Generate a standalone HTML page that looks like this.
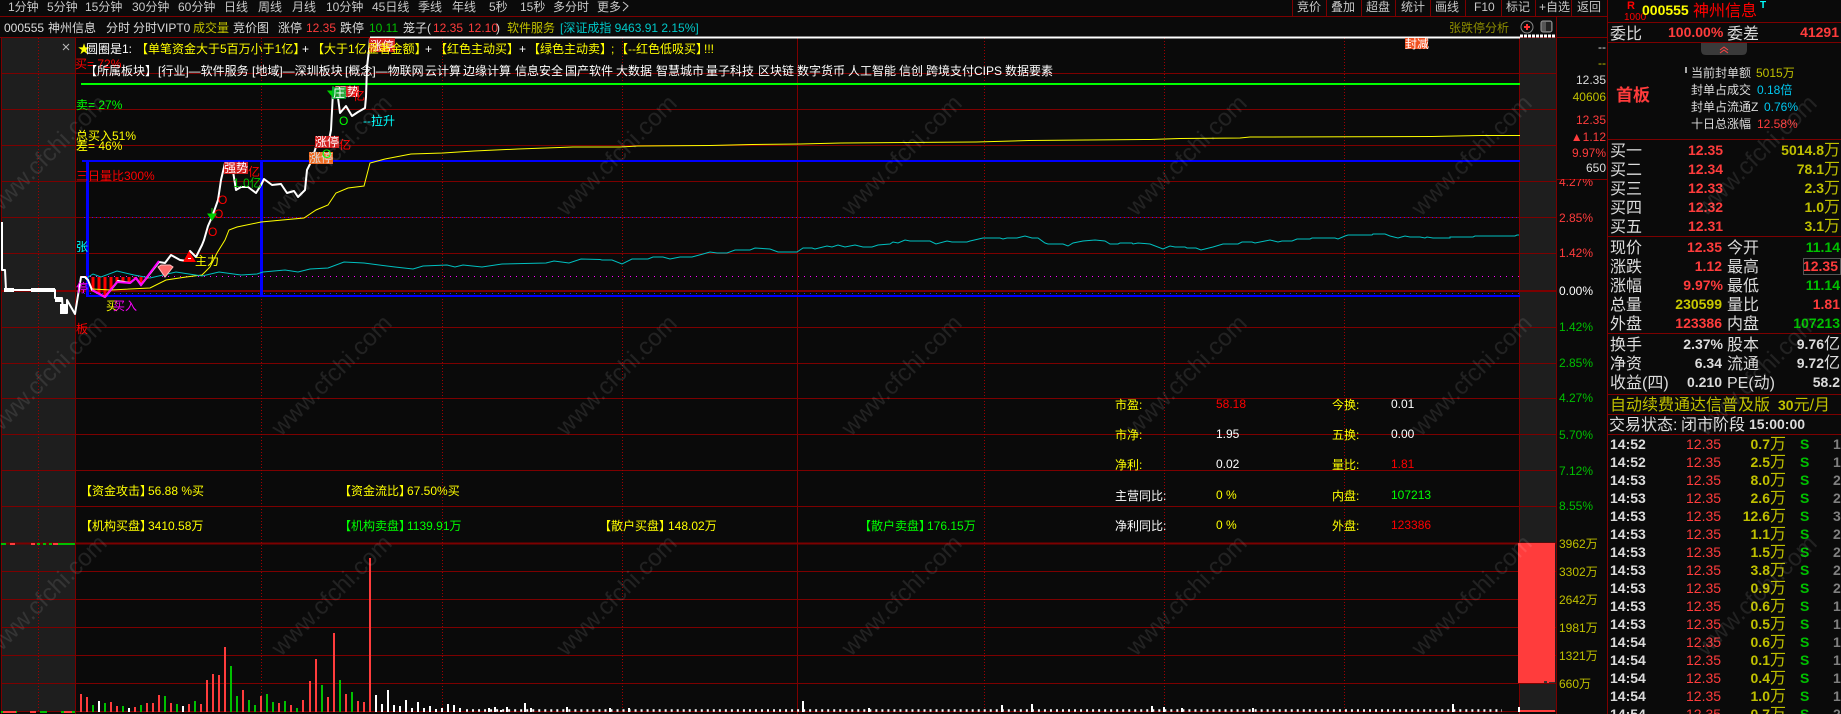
<!DOCTYPE html>
<html lang="zh"><head><meta charset="utf-8"><title>000555 神州信息</title>
<style>
html,body{margin:0;padding:0;background:#0a0a0a;width:1841px;height:714px;overflow:hidden}
svg{display:block;font-family:"Liberation Sans","WenQuanYi Zen Hei","Noto Sans CJK SC",sans-serif;font-size:12px}
text{white-space:pre}
.g1{fill:#c8c8c8}.w{fill:#fff}.lg{fill:#dcdcdc}.r{fill:#ff3c3c}.R{fill:#f00}.gr{fill:#00c000}.G{fill:#0f0}.y{fill:#ff0}.o{fill:#c0c000}.c{fill:#00c8c8}.C{fill:#0ff}.m{fill:#f0f}
.big{font-size:16px}.b{font-size:14px;font-weight:bold}.p{font-size:14px}
.u{font-size:16px;font-weight:normal}
.e{text-anchor:end}
</style></head><body>
<svg width="1841" height="714" viewBox="0 0 1841 714" xmlns="http://www.w3.org/2000/svg">
<rect width="1841" height="714" fill="#0a0a0a"/>
<rect x="2" y="38" width="73" height="674" fill="#1e1e1e"/>
<rect x="1520" y="38" width="36" height="674" fill="#1e1e1e"/>

<!-- grid -->
<g stroke="#7c0000" stroke-width="1" fill="none" shape-rendering="crispEdges">
<path d="M0 16.5H1607M0 37.5H1607M1607 22.5H1841M1607 42.5H1841M1607 139.5H1841M1607 236.5H1841M1607 333.5H1841M1607 394.5H1841M1607 414.5H1841M1607 434.5H1841M1556 179.5H1607"/>
<path d="M2 73.5H1556M2 109.5H1556M2 145.5H1556M2 181.5H1556M2 217.5H1556M2 253.5H1556M2 327.5H1556M2 363.5H1556M2 398.5H1556M2 434.5H1556M2 470.5H1556M2 506.5H1556M2 571.5H1556M2 599.5H1556M2 627.5H1556M2 655.5H1556M2 683.5H1556M2 711.5H1556"/>
<path d="M1.5 37V714M75.5 37V714M797.5 37V714M1519.5 37V714M1556.5 16V714M1607.5 0V714"/>
<path d="M1292.5 0V16M1326.5 0V16M1361.5 0V16M1395.5 0V16M1430.5 0V16M1465.5 0V16M1501.5 0V16M1535.5 0V16M1571.5 0V16"/>
</g>
<path d="M2 291H1556M2 543.5H1556" stroke="#7c0000" stroke-width="2" shape-rendering="crispEdges"/>
<g stroke="#a00000" stroke-width="1" stroke-dasharray="1 2" shape-rendering="crispEdges">
<path d="M38.5 38V712M261.5 38V712M442.5 38V712M622.5 38V712M984.5 38V712M1164.5 38V712M1344.5 38V712"/>
</g>

<!-- dots -->
<path d="M84 276.5H1519" stroke="#f0f" stroke-width="1" stroke-dasharray="1 5" shape-rendering="crispEdges"/>
<path d="M84 293.5H1519" stroke="#2020ff" stroke-width="1" stroke-dasharray="1 5" shape-rendering="crispEdges"/>
<path d="M84 217.5H1519" stroke="#2020ff" stroke-width="1" stroke-dasharray="1 3" shape-rendering="crispEdges"/>

<!-- level lines -->
<path d="M81 84H1520" stroke="#0f0" stroke-width="2" shape-rendering="crispEdges"/>
<path d="M82 161H1520M86 296H1520" stroke="#0000ff" stroke-width="2" fill="none" shape-rendering="crispEdges"/>
<path d="M87.5 160V297M261.5 160V297" stroke="#0000ff" stroke-width="3" fill="none" shape-rendering="crispEdges"/>
<path d="M370 37.5H1520" stroke="#fff" stroke-width="2" shape-rendering="crispEdges"/>
<path d="M1520 36H1556" stroke="#fff" stroke-width="3" stroke-dasharray="3 1" shape-rendering="crispEdges"/>

<!-- red bars -->
<path d="M93 277V290M99 277V294M105 277V297M111 277V290M117 277V282M123 277V282M129 277V283M135 277V278M141 277V285M147 277V279" stroke="#f00" stroke-width="3" fill="none"/>
<rect x="80" y="276" width="7" height="2" fill="#f00"/>

<!-- yellow avg line -->
<polyline fill="none" stroke="#ff0" stroke-width="1" points="92,289 111,290 150,288 166,280 186,277 202,275 210,267 217,253 225,240 229,230 237,227 261,222 304,218 316,210 328,205 336,193 348,188 364,186 370,163 385,159 411,154 443,153 474,151 518,149 573,147 620,147 638,146 710,145.5 752,144.5 800,144 841,143 976,142 1029,140.5 1150,139.5 1180,138.5 1240,138 1250,137 1432,136.5 1480,135.5 1520,135.5"/>

<!-- cyan line -->
<polyline fill="none" stroke="#00c0c0" stroke-width="1" points="85,279 93,274 101,277 117,271 134,275 150,278 176,272 202,276 219,272 241,275 257,274 263,272 285,270 298,272 310,269 328,268 344,262 364,263 395,267 413,269 423,266 447,265 455,267 463,265 482,267 502,264 546,263 554,261 569,263 581,259 600,259.5 602,260 612,260 622,264 632,259 648,259 653,257 663,257 670,259 680,257 692,257 703,254 710,252 717,253 727,253 735,250 750,250 755,248 770,249 778,252 795,252 797,252 803,248 812,248 815,249 827,246 832,247 838,245 845,247 855,245 863,247 872,247 878,245 890,244 893,242 898,243 905,240 910,241 930,241 936,244 947,241 952,242 967,242 970,241 983,238 1000,238 1003,239 1007,238 1017,238 1025,236 1032,238 1038,238 1045,243 1048,244 1063,244 1068,246 1073,243 1083,241 1095,240 1105,241 1110,244 1118,244 1120,243 1132,243 1133,244 1138,243 1150,244 1163,249 1170,246 1175,247 1185,247 1187,248 1196,248 1201,250 1213,247 1223,244 1238,244 1242,242 1252,242 1255,243 1270,240 1278,242 1282,241 1292,241 1297,239 1310,239 1312,238 1335,238 1338,239 1345,236 1348,235 1372,235 1373,234 1385,234 1390,236 1398,238 1405,236 1410,237 1420,237 1425,238 1427,237 1433,238 1450,238 1450,237 1473,237 1475,236 1515,236 1517,235 1519,235"/>

<!-- price line -->
<polyline fill="none" stroke="#fff" stroke-width="2" stroke-linejoin="round" points="2,222 2,270 5,270 6,290 55,290 55,298 62,298 63,313 67,313 67,300 75,314 81,277 85,277 88,280 92,290 105,297 118,281 130,283 136,278 141,285 159,262 165,263 171,255 180,260 187,261 190,251 196,257 202,245 204,240 208,226 212,217 218,200 221,180 225,163 232,165 236,190 241,187 248,187 256,193 261,185 264,179 272,185 281,184 287,193 294,191 298,197 305,190 307,170 312,160 318,140 325,138 328,145 331,130 333,92 337,90 340,113 346,106 352,116 358,112 365,108 366,97 367,67 369,50 370,38"/>
<polyline fill="none" stroke="#f0f" stroke-width="2" points="92,290 105,297 117,282 130,283 136,278 141,285 159,261"/>
<path d="M4 290H14M31 290H55M55 300H62" stroke="#fff" stroke-width="4" fill="none"/>
<rect x="60" y="304" width="6" height="10" fill="#fff"/>

<!-- volume -->
<g fill="none" stroke-width="2">
<path stroke="#ff3c3c" d="M81 694V712M87 697V712M111 702V712M117 706V712M135 707V712M147 703V712M153 703V712M159 695V712M171 703V712M189 704V712M201 704V712M207 680V712M213 674V712M219 675V712M225 647V712M243 690V712M261 696V712M279 703V712M291 705V712M303 700V712M310 681V712M316 659V712M328 697V712M334 633V712M346 694V712M358 701V712M364 702V712M370 558V712"/>
<path stroke="#00c000" d="M93 705V712M105 703V712M123 706V712M141 705V712M165 696V712M177 704V712M195 701V712M231 666V712M237 696V712M249 700V712M255 705V712M267 694V712M273 702V712M285 701V712M297 708V712M322 685V712M340 680V712M352 692V712"/>
<path stroke="#fff" d="M99 701V712M129 708V712M183 706V712M376 695V712M382 704V712M388 690V712M394 705V712M400 706V712M406 700V712M412 708V712M418 702V712M424 708V712M430 706V712M436 709V712M442 708V712M448 704V712M454 705V712M460 708V712M489 708V712M495 707V712M501 710V712M507 707V712M525 703V712M531 708V712M567 707V712M610 708V712M629 708V712M803 701V712M869 708V712M1002 705V712M1032 704V712M1152 706V712M1164 707V712M1182 708V712M1253 708V712M1453 704V712"/>
<path stroke="#fff" stroke-dasharray="2 4.02" d="M466 710.5H1502" stroke-width="2.5"/>
</g>
<path d="M1 712H75" stroke="#00c000" stroke-width="2" stroke-dasharray="5 4 7 14"/>
<path d="M3 712H16M30 712H36M64 712H72" stroke="#ff3c3c" stroke-width="2"/>
<path d="M1 544H75" stroke="#00c000" stroke-width="2" stroke-dasharray="5 6 3 22 3 3 3 3 3 6 20"/>
<path d="M10 544H15M31 544H35M53 544H58" stroke="#ff3c3c" stroke-width="2"/>

<!-- big right bar -->
<rect x="1518" y="543" width="37" height="140" fill="#ff3c3c"/>
<rect x="1544" y="681" width="3" height="2" fill="#333"/><rect x="1549" y="682" width="6" height="1" fill="#333"/>
<rect x="1519" y="710" width="36" height="2" fill="#ff3c3c"/>
<rect x="1518" y="707" width="2" height="5" fill="#fff"/>

<!-- labels -->
<rect x="224" y="162" width="24" height="12" fill="#d02020"/>
<rect x="315" y="136" width="24" height="12" fill="#d02020"/>
<rect x="309" y="152" width="24" height="12" fill="#f06a20"/>
<rect x="335" y="86" width="24" height="11" fill="#d02020"/>
<rect x="369" y="38" width="26" height="14" fill="#d02020"/>
<rect x="1405" y="38" width="23" height="11" fill="#f05020"/>
<text x="224" y="172" class="w">强势</text>
<text x="248" y="176" class="R">亿</text>
<text x="315" y="146" class="w">涨停</text>
<text x="339" y="149" class="R">亿</text>
<text x="309" y="162" class="lg">涨停</text>
<text x="335" y="96" class="w">强势</text>
<text x="353" y="100" class="R">亿</text>
<text x="370" y="50" class="w">涨停</text>
<text x="1405" y="48" class="w">封减</text>
<text x="233" y="187" class="gr">1.0亿</text>
<text x="218" y="204" class="R">O</text><text x="214" y="218" class="R">O</text><text x="208" y="236" class="R">O</text>
<text x="339" y="125" class="G">O</text><text x="322" y="158" class="G">O</text>
<path d="M212 208V215M208 214H216L212 220Z" fill="#00d000" stroke="#00d000"/>
<path d="M333 86V92M328 91H338L333 97Z" fill="#00d000" stroke="#00d000"/>
<rect x="332" y="87" width="14" height="12" fill="#00b030" opacity=".8"/>
<text x="333" y="97" class="w">庄</text>
<path d="M189 251L183 262H196Z" fill="#f00"/><rect x="188" y="258" width="3" height="1" fill="#fff"/>
<path d="M158 267L161 265H170L173 267L165 277Z" fill="#ff6a6a" stroke="#ffc0c0" stroke-width="1"/>

<text x="78" y="53" class="y">★</text>
<text x="86" y="53" class="w">圆圈是1:</text>
<text x="136" y="53" class="y">【单笔资金大于5百万小于1亿】</text>
<text x="302" y="53" class="w">+</text>
<text x="312" y="53" class="y">【大于1亿显著金额】</text>
<text x="425" y="53" class="w">+</text>
<text x="435" y="53" class="y">【红色主动买】</text>
<text x="519" y="53" class="w">+</text>
<text x="528" y="53" class="y">【绿色主动卖】</text>
<text x="611" y="53" class="y">;</text>
<text x="616" y="53" class="y">【--红色低吸买】</text>
<text x="704" y="53" class="y">!!!</text>

<text x="75" y="68" class="R">买= 72%</text>
<g class="w">
<text x="85" y="75">【所属板块】</text><text x="158" y="75">[行业]—软件服务</text><text x="252" y="75">[地域]—深圳板块</text><text x="345" y="75">[概念]—物联网</text><text x="425" y="75">云计算</text><text x="463" y="75">边缘计算</text><text x="515" y="75">信息安全</text><text x="565" y="75">国产软件</text><text x="616" y="75">大数据</text><text x="656" y="75">智慧城市</text><text x="706" y="75">量子科技</text><text x="758" y="75">区块链</text><text x="797" y="75">数字货币</text><text x="848" y="75">人工智能</text><text x="899" y="75">信创</text><text x="926" y="75">跨境支付CIPS</text><text x="1005" y="75">数据要素</text>
</g>
<text x="76" y="109" class="G">卖= 27%</text>
<text x="76" y="140" class="y">总买入51%</text>
<text x="76" y="150" class="y">差= 46%</text>
<text x="76" y="180" class="R">三日量比300%</text>
<text x="363" y="125" class="C">--拉升</text>
<text x="76" y="251" class="C">张</text>
<text x="76" y="292" class="m">停</text>
<text x="76" y="333" class="R">板</text>
<text x="106" y="310" class="y">买</text><text x="113" y="310" class="m">买</text><text x="125" y="310" class="m">入</text>
<text x="195" y="265" class="y">主力</text>

<!-- indicator table -->
<text x="80" y="495" class="y">【资金攻击】</text><text x="148" y="495" class="y">56.88 %买</text>
<text x="339" y="495" class="y">【资金流比】</text><text x="407" y="495" class="y">67.50%买</text>
<text x="80" y="530" class="y">【机构买盘】</text><text x="148" y="530" class="y">3410.58万</text>
<text x="339" y="530" class="G">【机构卖盘】</text><text x="407" y="530" class="G">1139.91万</text>
<text x="599" y="530" class="y">【散户买盘】</text><text x="668" y="530" class="y">148.02万</text>
<text x="859" y="530" class="G">【散户卖盘】</text><text x="927" y="530" class="G">176.15万</text>

<text x="1115" y="409" class="y">市盈:</text><text x="1216" y="408" class="R">58.18</text><text x="1332" y="409" class="y">今换:</text><text x="1391" y="408" class="w">0.01</text>
<text x="1115" y="439" class="y">市净:</text><text x="1216" y="438" class="w">1.95</text><text x="1332" y="439" class="y">五换:</text><text x="1391" y="438" class="w">0.00</text>
<text x="1115" y="469" class="y">净利:</text><text x="1216" y="468" class="w">0.02</text><text x="1332" y="469" class="y">量比:</text><text x="1391" y="468" class="R">1.81</text>
<text x="1115" y="500" class="w">主营同比:</text><text x="1216" y="499" class="y">0 %</text><text x="1332" y="500" class="y">内盘:</text><text x="1391" y="499" class="G">107213</text>
<text x="1115" y="530" class="w">净利同比:</text><text x="1216" y="529" class="y">0 %</text><text x="1332" y="530" class="y">外盘:</text><text x="1391" y="529" class="R">123386</text>

<!-- top bar -->
<g class="g1">
<text x="8" y="11">1分钟</text><text x="47" y="11">5分钟</text><text x="85" y="11">15分钟</text><text x="132" y="11">30分钟</text><text x="178" y="11">60分钟</text><text x="224" y="11">日线</text><text x="258" y="11">周线</text><text x="292" y="11">月线</text><text x="326" y="11">10分钟</text><text x="372" y="11">45日线</text><text x="418" y="11">季线</text><text x="452" y="11">年线</text><text x="489" y="11">5秒</text><text x="520" y="11">15秒</text><text x="553" y="11">多分时</text><text x="597" y="11">更多</text>
<path d="M623 2L628 6L623 11" fill="none" stroke="#c8c8c8"/>
<text x="1297" y="11">竞价</text><text x="1331" y="11">叠加</text><text x="1366" y="11">超盘</text><text x="1401" y="11">统计</text><text x="1435" y="11">画线</text><text x="1474" y="11">F10</text><text x="1506" y="11">标记</text><text x="1539" y="11">+自选</text><text x="1577" y="11">返回</text>
</g>
<!-- second row -->
<g class="lg">
<text x="4" y="32">000555</text><text x="48" y="32">神州信息</text><text x="106" y="32">分时</text><text x="133" y="32">分时VIPT0</text><text x="233" y="32">竞价图</text><text x="278" y="32">涨停</text><text x="340" y="32">跌停</text><text x="403" y="32">笼子(</text><text x="496" y="32">)</text>
</g>
<text x="193" y="32" class="o">成交量</text>
<text x="306" y="32" class="r">12.35</text>
<text x="369" y="32" class="gr">10.11</text>
<text x="433" y="32" class="r">12.35</text><text x="468" y="32" class="r">12.10</text>
<text x="507" y="32" class="o">软件服务</text>
<text x="560" y="32" class="c">[深证成指 9463.91 2.15%]</text>
<text x="1449" y="32" fill="#8c8c00">张跌停分析</text>
<circle cx="1527" cy="27" r="6" fill="none" stroke="#888"/><path d="M1527 24V30M1524 27H1530" stroke="#f33" stroke-width="2"/>
<rect x="1541" y="21" width="11" height="11" rx="2" fill="#555" stroke="#999"/><rect x="1546" y="22" width="5" height="9" fill="#222"/>

<!-- right axis -->
<text x="1606" y="51" class="lg e">--</text>
<text x="1606" y="67" class="o e">--</text>
<text x="1606" y="84" class="lg e">12.35</text>
<text x="1606" y="101" class="o e">40606</text>
<text x="1606" y="124" class="r e">12.35</text>
<text x="1606" y="141" class="r e">▲1.12</text>
<text x="1606" y="157" class="r e">9.97%</text>
<text x="1559" y="186" class="r">4.27%</text>
<rect x="1557" y="170" width="49" height="9" fill="#0a0a0a"/>
<text x="1606" y="172" class="lg e">650</text>
<text x="1559" y="222" class="r">2.85%</text>
<text x="1559" y="257" class="r">1.42%</text>
<text x="1559" y="295" class="w">0.00%</text>
<g class="gr">
<text x="1559" y="331">1.42%</text><text x="1559" y="367">2.85%</text><text x="1559" y="402">4.27%</text><text x="1559" y="439">5.70%</text><text x="1559" y="475">7.12%</text><text x="1559" y="510">8.55%</text>
</g>
<g class="o">
<text x="1559" y="548">3962万</text><text x="1559" y="576">3302万</text><text x="1559" y="604">2642万</text><text x="1559" y="632">1981万</text><text x="1559" y="660">1321万</text><text x="1559" y="688">660万</text>
</g>

<!-- right panel header -->
<text x="1627" y="9" class="R" style="font-size:11px;font-weight:bold">R</text>
<text x="1624" y="20" class="R" style="font-size:10px">1000</text>
<text x="1642" y="15" class="y" style="font-size:14px;font-weight:bold">000555</text>
<text x="1693" y="16" class="R" style="font-size:16px">神州信息</text>
<text x="1760" y="8" class="C" style="font-size:10px;font-weight:bold">T</text>
<text x="1610" y="39" class="lg big">委比</text>
<text x="1668" y="37" class="r b">100.00%</text>
<text x="1727" y="39" class="lg big">委差</text>
<text x="1839" y="37" class="r b e">41291</text>
<path d="M1701 43H1747V50Q1747 55 1742 55H1706Q1701 55 1701 50Z" fill="#3a3a3a"/>
<path d="M1720 50L1724 47L1728 50M1720 53L1724 50L1728 53" fill="none" stroke="#f44"/>
<text x="1616" y="101" class="r" style="font-size:17px;font-weight:bold">首板</text>
<rect x="1685" y="67" width="2" height="6" fill="#aaa"/>
<text x="1691" y="77" class="lg">当前封单额</text><text x="1756" y="77" class="o">5015万</text>
<text x="1691" y="94" class="lg">封单占成交</text><text x="1757" y="94" fill="#00c8f0">0.18倍</text>
<text x="1691" y="111" class="lg">封单占流通Z</text><text x="1764" y="111" fill="#00c8f0">0.76%</text>
<text x="1691" y="128" class="lg">十日总涨幅</text><text x="1757" y="128" class="r">12.58%</text>

<!-- five levels -->
<g class="lg big">
<text x="1610" y="156">买一</text><text x="1610" y="175">买二</text><text x="1610" y="194">买三</text><text x="1610" y="213">买四</text><text x="1610" y="232">买五</text>
</g>
<g class="r b">
<text x="1688" y="155">12.35</text><text x="1688" y="174">12.34</text><text x="1688" y="193">12.33</text><text x="1688" y="212">12.32</text><text x="1688" y="231">12.31</text>
</g>
<g class="o b e">
<text x="1840" y="155">5014.8<tspan class="u">万</tspan></text>
<text x="1840" y="174">78.1<tspan class="u">万</tspan></text>
<text x="1840" y="193">2.3<tspan class="u">万</tspan></text>
<text x="1840" y="212">1.0<tspan class="u">万</tspan></text>
<text x="1840" y="231">3.1<tspan class="u">万</tspan></text>
</g>

<!-- quote -->
<g class="lg big">
<text x="1610" y="253">现价</text><text x="1610" y="272">涨跌</text><text x="1610" y="291">涨幅</text><text x="1610" y="310">总量</text><text x="1610" y="329">外盘</text>
<text x="1727" y="253">今开</text><text x="1727" y="272">最高</text><text x="1727" y="291">最低</text><text x="1727" y="310">量比</text><text x="1727" y="329">内盘</text>
<text x="1610" y="350">换手</text><text x="1610" y="369">净资</text><text x="1610" y="388">收益(四)</text>
<text x="1727" y="350">股本</text><text x="1727" y="369">流通</text><text x="1727" y="388">PE(动)</text>
</g>
<g class="b e">
<text x="1722" y="252" class="r">12.35</text><text x="1722" y="271" class="r">1.12</text><text x="1723" y="290" class="r">9.97%</text><text x="1722" y="309" fill="#c8c800">230599</text><text x="1722" y="328" class="r">123386</text>
<text x="1840" y="252" class="gr">11.14</text><text x="1838" y="271" class="r">12.35</text><text x="1840" y="290" class="gr">11.14</text><text x="1840" y="309" class="r">1.81</text><text x="1840" y="328" class="gr">107213</text>
<text x="1723" y="349" class="lg">2.37%</text><text x="1722" y="368" class="lg">6.34</text><text x="1722" y="387" class="lg">0.210</text>
<text x="1840" y="349" class="lg">9.76<tspan class="u">亿</tspan></text><text x="1840" y="368" class="lg">9.72<tspan class="u">亿</tspan></text><text x="1840" y="387" class="lg">58.2</text>
</g>
<rect x="1803.5" y="258.5" width="37" height="16" fill="none" stroke="#555"/>
<text x="1610" y="410" class="o big">自动续费通达信普及版</text>
<text x="1778" y="410" class="o b">30<tspan class="u">元/月</tspan></text>
<text x="1609" y="430" class="lg big">交易状态:</text><text x="1681" y="430" class="lg big">闭市阶段</text>
<text x="1749" y="429" class="lg b">15:00:00</text>

<!-- ticks -->
<g class="lg b">
<text x="1610" y="449">14:52</text><text x="1610" y="467">14:52</text><text x="1610" y="485">14:53</text><text x="1610" y="503">14:53</text><text x="1610" y="521">14:53</text><text x="1610" y="539">14:53</text><text x="1610" y="557">14:53</text><text x="1610" y="575">14:53</text><text x="1610" y="593">14:53</text><text x="1610" y="611">14:53</text><text x="1610" y="629">14:53</text><text x="1610" y="647">14:54</text><text x="1610" y="665">14:54</text><text x="1610" y="683">14:54</text><text x="1610" y="701">14:54</text><text x="1610" y="719">14:54</text>
</g>
<g class="r p">
<text x="1686" y="449">12.35</text><text x="1686" y="467">12.35</text><text x="1686" y="485">12.35</text><text x="1686" y="503">12.35</text><text x="1686" y="521">12.35</text><text x="1686" y="539">12.35</text><text x="1686" y="557">12.35</text><text x="1686" y="575">12.35</text><text x="1686" y="593">12.35</text><text x="1686" y="611">12.35</text><text x="1686" y="629">12.35</text><text x="1686" y="647">12.35</text><text x="1686" y="665">12.35</text><text x="1686" y="683">12.35</text><text x="1686" y="701">12.35</text><text x="1686" y="719">12.35</text>
</g>
<g class="o b e">
<text x="1786" y="449">0.7<tspan class="u">万</tspan></text>
<text x="1786" y="467">2.5<tspan class="u">万</tspan></text>
<text x="1786" y="485">8.0<tspan class="u">万</tspan></text>
<text x="1786" y="503">2.6<tspan class="u">万</tspan></text>
<text x="1786" y="521">12.6<tspan class="u">万</tspan></text>
<text x="1786" y="539">1.1<tspan class="u">万</tspan></text>
<text x="1786" y="557">1.5<tspan class="u">万</tspan></text>
<text x="1786" y="575">3.8<tspan class="u">万</tspan></text>
<text x="1786" y="593">0.9<tspan class="u">万</tspan></text>
<text x="1786" y="611">0.6<tspan class="u">万</tspan></text>
<text x="1786" y="629">0.5<tspan class="u">万</tspan></text>
<text x="1786" y="647">0.6<tspan class="u">万</tspan></text>
<text x="1786" y="665">0.1<tspan class="u">万</tspan></text>
<text x="1786" y="683">0.4<tspan class="u">万</tspan></text>
<text x="1786" y="701">1.0<tspan class="u">万</tspan></text>
<text x="1786" y="719">0.7<tspan class="u">万</tspan></text>
</g>
<g class="gr b">
<text x="1800" y="449">S</text><text x="1800" y="467">S</text><text x="1800" y="485">S</text><text x="1800" y="503">S</text><text x="1800" y="521">S</text><text x="1800" y="539">S</text><text x="1800" y="557">S</text><text x="1800" y="575">S</text><text x="1800" y="593">S</text><text x="1800" y="611">S</text><text x="1800" y="629">S</text><text x="1800" y="647">S</text><text x="1800" y="665">S</text><text x="1800" y="683">S</text><text x="1800" y="701">S</text><text x="1800" y="719">S</text>
</g>
<g class="b" fill="#808080">
<text x="1833" y="449">1</text><text x="1833" y="467">1</text><text x="1833" y="485">2</text><text x="1833" y="503">2</text><text x="1833" y="521">3</text><text x="1833" y="539">2</text><text x="1833" y="557">2</text><text x="1833" y="575">2</text><text x="1833" y="593">2</text><text x="1833" y="611">1</text><text x="1833" y="629">1</text><text x="1833" y="647">1</text><text x="1833" y="665">1</text><text x="1833" y="683">1</text><text x="1833" y="701">1</text><text x="1833" y="719">2</text>
</g>

<!-- watermarks -->
<g fill="#ffffff" fill-opacity=".1" style="font-size:24px">
<text transform="translate(-4,217) rotate(-45)">www.cfchi.com</text><text transform="translate(281,217) rotate(-45)">www.cfchi.com</text><text transform="translate(566,217) rotate(-45)">www.cfchi.com</text><text transform="translate(851,217) rotate(-45)">www.cfchi.com</text><text transform="translate(1136,217) rotate(-45)">www.cfchi.com</text><text transform="translate(1421,217) rotate(-45)">www.cfchi.com</text><text transform="translate(1706,217) rotate(-45)">www.cfchi.com</text>
<text transform="translate(-4,437) rotate(-45)">www.cfchi.com</text><text transform="translate(281,437) rotate(-45)">www.cfchi.com</text><text transform="translate(566,437) rotate(-45)">www.cfchi.com</text><text transform="translate(851,437) rotate(-45)">www.cfchi.com</text><text transform="translate(1136,437) rotate(-45)">www.cfchi.com</text><text transform="translate(1421,437) rotate(-45)">www.cfchi.com</text><text transform="translate(1706,437) rotate(-45)">www.cfchi.com</text>
<text transform="translate(-4,657) rotate(-45)">www.cfchi.com</text><text transform="translate(281,657) rotate(-45)">www.cfchi.com</text><text transform="translate(566,657) rotate(-45)">www.cfchi.com</text><text transform="translate(851,657) rotate(-45)">www.cfchi.com</text><text transform="translate(1136,657) rotate(-45)">www.cfchi.com</text><text transform="translate(1421,657) rotate(-45)">www.cfchi.com</text><text transform="translate(1706,657) rotate(-45)">www.cfchi.com</text>
</g>
<path d="M63 44L69 50M69 44L63 50" stroke="#bbb" stroke-width="1" fill="none"/>
</svg>
</body></html>
